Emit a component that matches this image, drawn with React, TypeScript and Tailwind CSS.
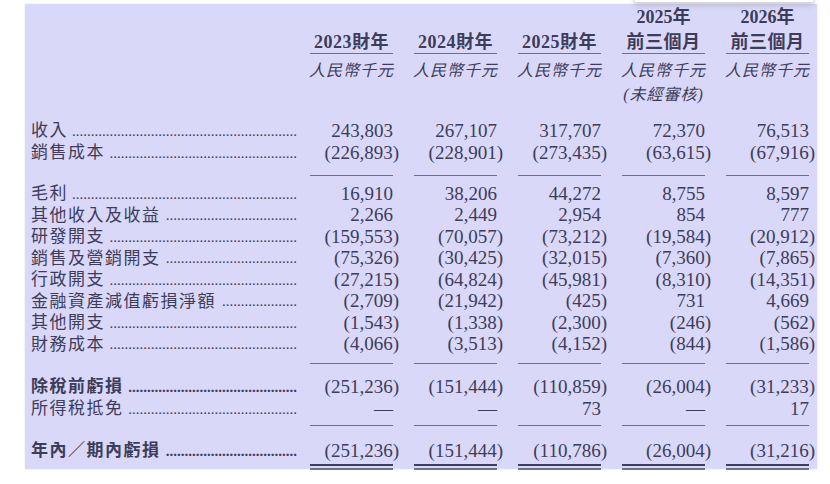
import React from "react";

type Row = { label: string; values: string[]; bold?: boolean };

const cols = [
  { top: "", head: "2023財年", unit: "人民幣千元" },
  { top: "", head: "2024財年", unit: "人民幣千元" },
  { top: "", head: "2025財年", unit: "人民幣千元" },
  { top: "2025年", head: "前三個月", unit: "人民幣千元", note: "(未經審核)" },
  { top: "2026年", head: "前三個月", unit: "人民幣千元" },
];

const revenue: Row[] = [
  { label: "收入", values: ["243,803", "267,107", "317,707", "72,370", "76,513"] },
  { label: "銷售成本", values: ["(226,893)", "(228,901)", "(273,435)", "(63,615)", "(67,916)"] },
];

const expenses: Row[] = [
  { label: "毛利", values: ["16,910", "38,206", "44,272", "8,755", "8,597"] },
  { label: "其他收入及收益", values: ["2,266", "2,449", "2,954", "854", "777"] },
  { label: "研發開支", values: ["(159,553)", "(70,057)", "(73,212)", "(19,584)", "(20,912)"] },
  { label: "銷售及營銷開支", values: ["(75,326)", "(30,425)", "(32,015)", "(7,360)", "(7,865)"] },
  { label: "行政開支", values: ["(27,215)", "(64,824)", "(45,981)", "(8,310)", "(14,351)"] },
  { label: "金融資產減值虧損淨額", values: ["(2,709)", "(21,942)", "(425)", "731", "4,669"] },
  { label: "其他開支", values: ["(1,543)", "(1,338)", "(2,300)", "(246)", "(562)"] },
  { label: "財務成本", values: ["(4,066)", "(3,513)", "(4,152)", "(844)", "(1,586)"] },
];

const beforeTax: Row[] = [
  { label: "除稅前虧損", bold: true, values: ["(251,236)", "(151,444)", "(110,859)", "(26,004)", "(31,233)"] },
  { label: "所得稅抵免", values: ["—", "—", "73", "—", "17"] },
];

const result: Row = {
  label: "年內／期內虧損",
  bold: true,
  values: ["(251,236)", "(151,444)", "(110,786)", "(26,004)", "(31,216)"],
};

// leader dots fill what the label leaves of the 266px label column
const leader = (label: string) => ".".repeat(Math.floor((266 - label.length * 18.5 - 3) / 3.75));

const Amount = ({ v }: { v: string }) => {
  if (v.startsWith("(")) {
    return (
      <span>
        {v.slice(0, -1)}
        <span className="-mr-[6px]">)</span>
      </span>
    );
  }
  return <span>{v}</span>;
};

const TableRow = ({ row, className = "h-[21.5px]" }: { row: Row; className?: string }) => (
  <div className={`flex items-center ${className}`}>
    <div className="w-[279px] pr-[13px] flex items-center justify-between">
      <span className={`text-[17px] tracking-[1.5px] whitespace-nowrap ${row.bold ? "font-bold" : ""}`}>
        {row.label}
      </span>
      <span className={`text-[15px] whitespace-nowrap ${row.bold ? "font-bold" : ""}`}>{leader(row.label)}</span>
    </div>
    <div className="flex gap-[21px]">
      {row.values.map((v, i) => (
        <div key={i} className="w-[83px] text-right text-[19px] whitespace-nowrap">
          <Amount v={v} />
        </div>
      ))}
    </div>
  </div>
);

const Rule = ({ className = "" }: { className?: string }) => (
  <div className={`flex ${className}`}>
    <div className="w-[279px]" />
    <div className="flex gap-[21px]">
      {cols.map((_, i) => (
        <div key={i} className="w-[83px] h-[1px] bg-[#6f6e90]" />
      ))}
    </div>
  </div>
);

export default function App() {
  return (
    <div className="relative w-[830px] h-[484px] bg-white overflow-hidden font-['Liberation_Serif','Noto_Sans_CJK_TC',serif] text-[#3d3c5a]">
      {/* popup edge peeking at the top */}
      <div className="absolute left-[633px] top-[-20px] w-[182px] h-[23px] bg-white border border-[#d6d6d6] rounded-[3px] shadow-md z-10" />

      <div className="ml-[25px] mt-[4px] w-[792px] h-[465px] bg-[#d9d8f8] pl-[6px] shadow-[0_0_2px_rgba(0,0,0,0.12)]">
        {/* header */}
        <div className="flex">
          <div className="w-[279px]" />
          <div className="flex gap-[21px]">
            {cols.map((c, i) => (
              <div key={i} className="w-[83px] flex flex-col">
                <div className="h-[27px] flex items-center justify-center text-[18px] font-bold whitespace-nowrap">
                  {c.top}
                </div>
                <div className="h-[23px] border-b border-[#6f6e90] flex items-center justify-center text-[18px] font-bold tracking-[0.5px] whitespace-nowrap">
                  {c.head}
                </div>
                <div className="mt-[5px] h-[24px] flex items-center justify-center text-[16px] italic tracking-[1px] whitespace-nowrap">
                  {c.unit}
                </div>
                {c.note && (
                  <div className="h-[24px] flex items-center justify-center text-[16px] italic tracking-[1px] whitespace-nowrap">
                    {c.note}
                  </div>
                )}
              </div>
            ))}
          </div>
        </div>

        <div className="mt-[13px]">
          {revenue.map((r) => (
            <TableRow key={r.label} row={r} className="h-[22px]" />
          ))}
        </div>
        <Rule className="mt-[11px]" />

        <div className="mt-[7px]">
          {expenses.map((r) => (
            <TableRow key={r.label} row={r} />
          ))}
        </div>
        <Rule className="mt-[8px]" />

        <div className="mt-[12px]">
          {beforeTax.map((r) => (
            <TableRow key={r.label} row={r} className="h-[22px]" />
          ))}
        </div>
        <Rule className="mt-[5px]" />

        <div className="mt-[14px]">
          <TableRow row={result} className="h-[22px]" />
        </div>
        <div className="flex mt-[2px]">
          <div className="w-[279px]" />
          <div className="flex gap-[21px]">
            {cols.map((_, i) => (
              <div key={i} className="w-[83px] flex flex-col gap-[2px]">
                <div className="h-[2px] bg-[#3f3e5e]" />
                <div className="h-[1.5px] bg-[#6f6e90]" />
              </div>
            ))}
          </div>
        </div>
      </div>
    </div>
  );
}
